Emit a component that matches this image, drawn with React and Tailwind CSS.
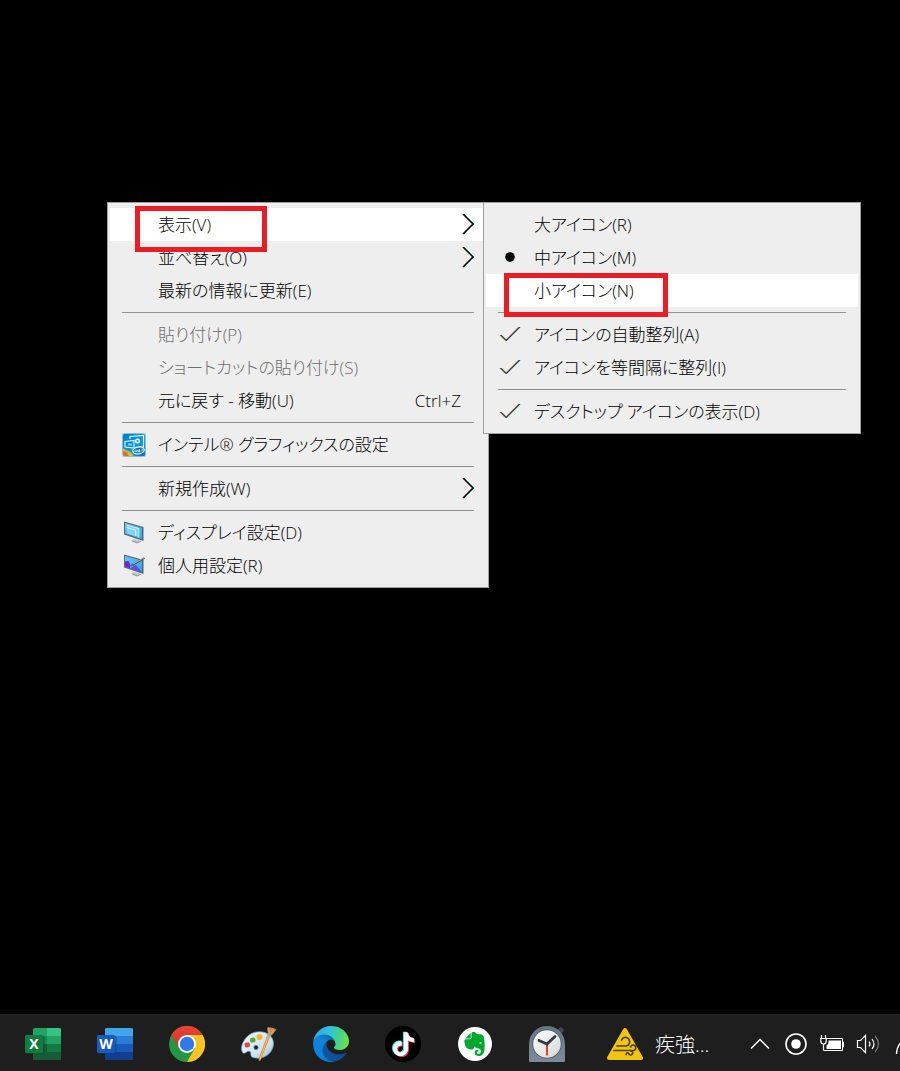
import React from "react";
import { SiTiktok, SiEvernote } from "react-icons/si";

const uiFont =
  "font-['Open_Sans','Noto_Sans_CJK_JP',sans-serif] [font-feature-settings:'palt'] font-light";

function Chevron() {
  return (
    <svg className="h-[22px] w-3 shrink-0" viewBox="0 0 12 22" fill="none" aria-hidden="true">
      <path d="M1 0L11 10L1 20" stroke="#f2a65a" strokeWidth="1" transform="translate(-1 0)" />
      <path d="M1 0L11 10L1 20" stroke="#0078b8" strokeWidth="1" transform="translate(.9 0)" />
      <path d="M1 0L11 10L1 20" stroke="#000" strokeWidth="1.1" />
    </svg>
  );
}

function Check() {
  return (
    <svg className="size-6" viewBox="0 0 24 24" fill="none" aria-hidden="true">
      <path d="M2.500 12L8 17.500L21.500 4" stroke="#e8a05a" transform="translate(-.9 0)" />
      <path d="M2.500 12L8 17.500L21.500 4" stroke="#2478a8" transform="translate(.8 0)" />
      <path d="M2.500 12L8 17.500L21.500 4" stroke="#000" strokeWidth="1" />
    </svg>
  );
}

function Dot() {
  return (
    <svg className="size-6" viewBox="0 0 24 24" aria-hidden="true">
      <circle cx="12" cy="11" r="4.800" fill="#000" />
    </svg>
  );
}

function IntelIcon() {
  return (
    <svg className="size-6" viewBox="0 0 24 24" fill="none" aria-hidden="true">
      <defs>
        <linearGradient id="intel" x1="0" y1="0" x2="1" y2="1">
          <stop offset="0" stopColor="#087bc6" />
          <stop offset=".6" stopColor="#079be1" />
          <stop offset="1" stopColor="#006fb9" />
        </linearGradient>
      </defs>
      <rect width="24" height="24" rx="1" fill="#b8cbd6" />
      <rect x=".8" y=".8" width="22.400" height="22.400" rx="2.500" fill="url(#intel)" />
      <path d="M1 15.500C5 17 9 19 12 23H3Q1 23 1 21Z" fill="#e9b928" />
      <path d="M1 18L4 19L7 23H3Q1 23 1 21Z" fill="#e46b25" />
      <path d="M3 17l2 1 1 3" stroke="#8fbd46" />
      <path d="M8 6V3.500L21.500 2.500V14L17 13.500" stroke="#e5f7ff" strokeWidth="1.200" />
      <path d="M3 8.500L12 7.500V15L3 14Z" stroke="#d9f3ff" strokeWidth="1.200" />
      <path d="M6 10.500h4v2H6z" fill="#7bd2fa" />
      <circle cx="15.500" cy="8" r="2.500" fill="#e8f8ff" />
      <circle cx="15.500" cy="8" r=".9" fill="#087bc6" />
      <ellipse cx="16.500" cy="17.500" rx="5.700" ry="3.400" fill="#0874b8" stroke="#effaff" strokeWidth="1.200" transform="rotate(-8 16.500 17.500)" />
      <path d="M13 16.500v3M14.700 19.300v-2h1.500v2M17.500 16v3h1M20 15.500v3" stroke="#fff" strokeWidth=".8" />
    </svg>
  );
}

function DisplayIcon({ pen = false }) {
  return (
    <svg className="size-6" viewBox="0 0 24 24" fill="none" aria-hidden="true">
      <defs>
        <linearGradient id="screen" x1="0" y1="0" x2="1" y2="1">
          <stop offset="0" stopColor="#68c4f5" />
          <stop offset="1" stopColor="#2ba5ef" />
        </linearGradient>
      </defs>
      <g transform="translate(0 -1)">
        <path d="M9 20L14 19L19 21L14.500 23Z" fill="#b9c1c5" />
        <path d="M10 21L15 23L19 21.300" stroke="#737d82" strokeWidth=".7" />
        <path d="M12 17l4 1.500v2.500l-4-1.500z" fill="#d5dcdf" />
        <path d="M2 1.500L21.500 7V21L2 14.500Z" fill="#59676f" />
        <path d="M3 3L20 7.700V19.300L3 13.600Z" fill="url(#screen)" />
        {pen ? (
          <>
            <path d="M3 8.500L6.500 8L8 11V15.200L3 13.600Z" fill="#7422db" />
            <path d="M8 15.200L14 12L20 19.300Z" fill="#6745e0" />
            <path d="M7.500 13.500Q8.500 11 11 11L13 10Q12 13.500 7.500 13.500Z" fill="#4a6575" />
            <path d="M10.500 12L22.500 5" stroke="#4a5357" strokeWidth="2" />
            <path d="M11 11.200L22 4.800" stroke="#bac6cb" strokeWidth=".8" />
          </>
        ) : (
          <>
            <path d="M5 5.200L16.800 8.500V17.300L5 13.500Z" fill="#83d2fb" />
            <path d="M4.500 5L16.800 8.500V17.500M4.500 7.500L13.700 10V16" stroke="#d5f3ff" />
          </>
        )}
      </g>
    </svg>
  );
}

function Item({ icon, label, shortcut, arrow, active, disabled, mark }) {
  return (
    <div className="relative">
      <button
        type="button"
        role="menuitem"
        disabled={disabled}
        className={`flex h-[33px] w-full items-center gap-3 px-3 text-left text-[17px] leading-6 whitespace-nowrap ${
          active ? "bg-white" : ""
        } ${disabled ? "text-[#6d6d6d]" : "text-black"}`}
      >
        <span className="flex w-6 shrink-0 items-center justify-center">{icon}</span>
        <span className="flex-1 pt-px">{label}</span>
        {shortcut && <span className="pt-px pr-[13px]">{shortcut}</span>}
        {arrow && <Chevron />}
      </button>
      {mark}
    </div>
  );
}

function Separator() {
  return (
    <div role="separator" className="px-3 py-[5px]">
      <div className="h-px bg-[#919191]" />
    </div>
  );
}

function Menu({ label, className, children }) {
  return (
    <div
      role="menu"
      aria-label={label}
      className={`absolute border border-[#a0a0a0] bg-[#eeeeee] px-[2px] py-[5px] ${className}`}
    >
      {children}
    </div>
  );
}

function ExcelIcon() {
  return (
    <svg className="size-9" viewBox="0 0 36 36" aria-hidden="true">
      <rect x="8" y="2" width="28" height="32" rx="1.500" fill="#21a366" />
      <path d="M22 2h12.500q1.500 0 1.500 1.500V10H22z" fill="#33c481" />
      <path d="M8 10h14v8H8z" fill="#128b50" />
      <path d="M22 18h14v8H22z" fill="#107c41" />
      <path d="M8 18h14v8h14v6.500q0 1.500-1.500 1.500h-25Q8 34 8 32.500z" fill="#185c37" />
      <rect x="1" y="10" width="18.500" height="18" rx="1.500" fill="#0b4c2b" opacity=".5" />
      <rect y="9" width="18" height="18" rx="1.500" fill="#107c41" />
      <text x="9" y="23.200" textAnchor="middle" fontFamily="Open Sans" fontWeight="700" fontSize="14" fill="#fff">X</text>
    </svg>
  );
}

function WordIcon() {
  return (
    <svg className="size-9" viewBox="0 0 36 36" aria-hidden="true">
      <rect x="8" y="2" width="28" height="32" rx="1.500" fill="#2b7cd3" />
      <path d="M9.500 2h25Q36 2 36 3.500V10H8V3.500Q8 2 9.500 2z" fill="#41a5ee" />
      <path d="M8 18h28v8H8z" fill="#185abd" />
      <path d="M8 26h28v6.500q0 1.500-1.500 1.500h-25Q8 34 8 32.500z" fill="#103f91" />
      <rect x="1" y="10" width="18.500" height="18" rx="1.500" fill="#103773" opacity=".5" />
      <rect y="9" width="18" height="18" rx="1.500" fill="#185abd" />
      <text x="9" y="23" textAnchor="middle" fontFamily="Open Sans" fontWeight="700" fontSize="14" fill="#fff">W</text>
    </svg>
  );
}

function ChromeIcon() {
  return (
    <svg className="size-9" viewBox="0 0 36 36" aria-hidden="true">
      <defs>
        <linearGradient id="cred" x1="0" y1="0" x2="0" y2="1">
          <stop stopColor="#ea4335" />
          <stop offset="1" stopColor="#d93025" />
        </linearGradient>
      </defs>
      <circle cx="18" cy="18" r="18" fill="#249747" />
      <path d="M18 9H33.590A18 18 0 0 1 18 36L25.800 22.500Z" fill="#fcc31e" />
      <path d="M2.410 9A18 18 0 0 1 33.590 9H18L10.200 22.500Z" fill="url(#cred)" />
      <circle cx="18" cy="18" r="9" fill="#fff" />
      <circle cx="18" cy="18" r="7.200" fill="#3078ec" />
    </svg>
  );
}

function PaintIcon() {
  return (
    <svg className="size-9" viewBox="0 0 36 36" aria-hidden="true">
      <defs>
        <linearGradient id="palette" x1="0" y1="0" x2="1" y2="1">
          <stop stopColor="#f1f8fc" />
          <stop offset=".65" stopColor="#cde3f0" />
          <stop offset="1" stopColor="#8fb7d3" />
        </linearGradient>
      </defs>
      <path fillRule="evenodd" d="M13 6.500C23 3.500 33 9 32.500 18C32 28 22 34 13 31.800C8 30.500 11 27 9 25.500C6 24 4 29 1.500 26.500C-2 21 4 9 13 6.500ZM15 19.300A2.200 2.200 0 1 0 15 23.700A2.200 2.200 0 1 0 15 19.300Z" fill="url(#palette)" stroke="#729ebb" strokeWidth=".7" />
      <rect x="3.500" y="16.500" width="5.500" height="5" rx="2" fill="#dc4a42" transform="rotate(-8 6 19)" />
      <rect x="9" y="11.500" width="5.500" height="5" rx="2" fill="#58ab35" transform="rotate(-8 12 14)" />
      <rect x="15.500" y="8.500" width="6" height="5.500" rx="2" fill="#f6b42e" transform="rotate(-8 18 11)" />
      <path d="M30 8L19.500 34.500L17.500 35L17.800 32.500L27 7.500Z" fill="#e88725" />
      <path d="M27.500 10L19 33" stroke="#ffc77d" strokeWidth=".9" />
      <path d="M26.500 8L30 9.500L29 13L25 11.500Z" fill="#aab7c0" />
      <path d="M26.500 8.500C28 6 25 4 27 1C29 2 33 1 35.500 4C33 5 32.500 9 29.500 9.800Z" fill="#c98e54" />
      <path d="M28 8C29 6 27 4 28 2M30 8L33 4" stroke="#eac18c" strokeWidth=".7" fill="none" />
    </svg>
  );
}

function EdgeIcon() {
  return (
    <svg className="size-9" viewBox="0 0 256 256" aria-hidden="true">
      <defs>
        <linearGradient id="edgea" x1="63" y1="178" x2="241" y2="178" gradientUnits="userSpaceOnUse">
          <stop stopColor="#0c59a4" />
          <stop offset="1" stopColor="#114a8b" />
        </linearGradient>
        <linearGradient id="edgeb" x1="140" y1="85" x2="46" y2="220" gradientUnits="userSpaceOnUse">
          <stop stopColor="#0f6bb8" />
          <stop offset=".35" stopColor="#1484d4" />
          <stop offset="1" stopColor="#0c80dc" />
        </linearGradient>
        <linearGradient id="edgec" x1="10" y1="70" x2="255" y2="130" gradientUnits="userSpaceOnUse">
          <stop stopColor="#2fa9e1" />
          <stop offset=".4" stopColor="#2fc2df" />
          <stop offset=".7" stopColor="#43d58c" />
          <stop offset="1" stopColor="#74df45" />
        </linearGradient>
      </defs>
      <g transform="translate(-4.630 -4.920)">
        <path fill="url(#edgea)" d="M235.680 195.460a93.730 93.730 0 0 1-10.540 4.710 101.870 101.870 0 0 1-35.900 6.460c-47.320 0-88.540-32.550-88.540-74.320A31.480 31.480 0 0 1 117.130 105c-42.800 1.800-53.800 46.400-53.800 72.530 0 73.880 68.090 81.370 82.760 81.370 7.910 0 19.840-2.300 27-4.560l1.310-.44a128.340 128.340 0 0 0 66.600-52.800 4 4 0 0 0-5.320-5.640Z" />
        <path fill="url(#edgeb)" d="M110.340 246.340A79.200 79.200 0 0 1 87.600 225a80.720 80.720 0 0 1 29.530-120c3.120-1.470 8.450-4.130 15.540-4a32.350 32.350 0 0 1 25.690 13 31.880 31.880 0 0 1 6.360 18.660c0-.21 24.460-79.600-80-79.600-43.900 0-80 41.660-80 78.210a130.150 130.150 0 0 0 12.110 56 128 128 0 0 0 156.380 67.110 75.550 75.550 0 0 1-62.780-8Z" />
        <path fill="url(#edgec)" d="M156.940 153.780c-.81 1-3.300 2.500-3.300 5.660 0 2.610 1.700 5.120 4.720 7.230 14.380 10 41.490 8.680 41.560 8.680a59.560 59.560 0 0 0 30.270-8.350 61.380 61.380 0 0 0 30.430-52.880c.26-22.410-8-37.310-11.340-43.910C228.100 28.760 182.350 5 132.610 5a128 128 0 0 0-128 126.200c.48-36.540 36.800-66.050 80-66.050 3.500 0 23.460.34 42 10.070 16.340 8.580 24.900 18.940 30.850 29.210 6.180 10.670 7.280 24.150 7.280 29.520s-2.740 13.330-7.800 19.830Z" />
      </g>
    </svg>
  );
}

function TiktokIcon() {
  return (
    <svg className="size-9" viewBox="0 0 36 36" aria-hidden="true">
      <circle cx="18" cy="18" r="18" fill="#000" />
      <SiTiktok x="5.500" y="5.500" size={24} color="#25f4ee" />
      <SiTiktok x="7.500" y="7.100" size={24} color="#fe2c55" />
      <SiTiktok x="6.500" y="6.300" size={24} color="#fff" />
    </svg>
  );
}

function EvernoteIcon() {
  return (
    <svg className="size-9" viewBox="0 0 36 36" aria-hidden="true">
      <circle cx="18" cy="18" r="17" fill="#fff" />
      <SiEvernote x="5.500" y="6" size={24} color="#00a82d" />
    </svg>
  );
}

function ClockIcon() {
  return (
    <svg className="size-9" viewBox="0 0 36 36" aria-hidden="true">
      <defs>
        <linearGradient id="clock" x1="0" y1="0" x2="0" y2="1">
          <stop stopColor="#637581" />
          <stop offset="1" stopColor="#7b8b98" />
        </linearGradient>
        <linearGradient id="face" x1="0" y1="0" x2="1" y2="1">
          <stop stopColor="#fff" />
          <stop offset="1" stopColor="#d2d5d7" />
        </linearGradient>
      </defs>
      <path d="M28 4L31 1.500Q32 .8 33 1.700L34.500 3.500Q35.300 4.500 34.500 5.500L32 8Z" fill="#41494e" />
      <path d="M0 18A18 18 0 0 1 36 18V35Q36 36 35 36H1Q0 36 0 35Z" fill="url(#clock)" />
      <circle cx="18" cy="18" r="14.500" fill="#475963" />
      <circle cx="18" cy="18" r="13.800" fill="url(#face)" />
      <path d="M18 18V29.500" stroke="#df451a" strokeWidth="2" />
      <path d="M10 14.500L18 18L26 10.500" fill="none" stroke="#303940" strokeWidth="2.800" strokeLinecap="round" strokeLinejoin="round" />
    </svg>
  );
}

function WindIcon() {
  return (
    <svg className="size-9 shrink-0" viewBox="0 0 36 36" fill="none" aria-hidden="true">
      <path d="M18 4L34 32H2Z" fill="#f2c410" stroke="#f2c410" strokeWidth="4" strokeLinejoin="round" />
      <g stroke="#4b4117" strokeWidth="1.700" strokeLinecap="round">
        <path d="M10 20H19A4.300 4.300 0 1 0 14.500 14" />
        <path d="M7 24.500H26A2.700 2.700 0 1 0 23.500 21" />
        <path d="M19 28.500Q20 25.700 22 28A2 2 0 1 0 24 25" />
      </g>
    </svg>
  );
}

const apps = [
  ["Excel", ExcelIcon],
  ["Word", WordIcon],
  ["Chrome", ChromeIcon],
  ["Paint", PaintIcon],
  ["Edge", EdgeIcon],
  ["TikTok", TiktokIcon],
  ["Evernote", EvernoteIcon],
  ["Clock", ClockIcon],
];

function TrayButton({ label, children }) {
  return (
    <button type="button" aria-label={label} className="flex h-full w-9 shrink-0 items-center justify-center">
      <svg className="size-6" viewBox="0 0 24 24" fill="none" stroke="#fff" strokeWidth="1.400" aria-hidden="true">
        {children}
      </svg>
    </button>
  );
}

function Taskbar() {
  return (
    <footer className="flex h-[57px] items-center overflow-hidden border-t border-[#222222] bg-[#1e1e1e] pt-[2px] pl-[7px]">
      {apps.map(([name, Icon]) => (
        <button key={name} type="button" aria-label={name} className="flex h-full w-[72px] shrink-0 items-center justify-center">
          <Icon />
        </button>
      ))}
      <button type="button" className="flex h-full w-[159px] shrink-0 items-center gap-3 pl-6 text-[20px] leading-7 whitespace-nowrap text-white">
        <WindIcon />
        <span className="pt-[2px]">疾強...</span>
      </button>
      <TrayButton label="Hidden icons">
        <path d="M3 16.500L12 7.500L21 16.500" />
      </TrayButton>
      <TrayButton label="Recorder">
        <circle cx="12" cy="12" r="10" strokeWidth="1.600" />
        <circle cx="12" cy="12" r="4.800" fill="#fff" stroke="none" />
      </TrayButton>
      <TrayButton label="Battery">
        <path d="M6.500 6.500H22.500V18.500H3.500V14" strokeWidth="1" />
        <path d="M8.500 8.500H21V17H6.500V13.500Q8.500 12.500 8.500 10Z" fill="#fff" stroke="none" />
        <path d="M22.500 10H23.500V15H22.500" strokeWidth="1" />
        <path d="M1.500 3V6M5.500 3V6M0 6.500H7M.8 6.500V9Q.8 12 3.500 12Q6.200 12 6.200 9V6.500M3.500 12V18" strokeWidth="1.200" />
      </TrayButton>
      <TrayButton label="Volume">
        <path d="M1.500 8.500H4.500L9.500 3.500V20.500L4.500 15.500H1.500Z" strokeWidth="1.200" />
        <path d="M13 9.500Q15 12 13 14.500M16 7Q20 12 16 17" strokeWidth="1.200" />
        <path d="M19 4Q26 12 19 20" stroke="#777" strokeWidth="1.200" />
      </TrayButton>
      <TrayButton label="Network">
        <path d="M4.500 22Q4.500 13 13 6" strokeWidth="1.300" />
      </TrayButton>
    </footer>
  );
}

export default function App() {
  return (
    <div className={`flex min-h-screen flex-col bg-black ${uiFont}`}>
      <main className="relative min-h-[600px] flex-1">
        <Menu label="デスクトップ" className="top-[202px] left-[107px] w-[382px]">
          <Item
            label="表示(V)"
            arrow
            active
            mark={<div className="pointer-events-none absolute -top-[2px] left-[25px] z-10 h-[46px] w-[132px] border-5 border-[#ed1c24]" />}
          />
          <Item label="並べ替え(O)" arrow />
          <Item label="最新の情報に更新(E)" />
          <Separator />
          <Item label="貼り付け(P)" disabled />
          <Item label="ショートカットの貼り付け(S)" disabled />
          <Item label="元に戻す - 移動(U)" shortcut="Ctrl+Z" />
          <Separator />
          <Item icon={<IntelIcon />} label="インテル® グラフィックスの設定" />
          <Separator />
          <Item label="新規作成(W)" arrow />
          <Separator />
          <Item icon={<DisplayIcon />} label="ディスプレイ設定(D)" />
          <Item icon={<DisplayIcon pen />} label="個人用設定(R)" />
        </Menu>
        <Menu label="表示" className="top-[202px] left-[483px] w-[378px]">
          <Item label="大アイコン(R)" />
          <Item icon={<Dot />} label="中アイコン(M)" />
          <Item
            label="小アイコン(N)"
            active
            mark={<div className="pointer-events-none absolute -top-px left-[18px] z-10 h-[44px] w-[164px] border-5 border-[#ed1c24]" />}
          />
          <Separator />
          <Item icon={<Check />} label="アイコンの自動整列(A)" />
          <Item icon={<Check />} label="アイコンを等間隔に整列(I)" />
          <Separator />
          <Item icon={<Check />} label="デスクトップ アイコンの表示(D)" />
        </Menu>
      </main>
      <Taskbar />
    </div>
  );
}
